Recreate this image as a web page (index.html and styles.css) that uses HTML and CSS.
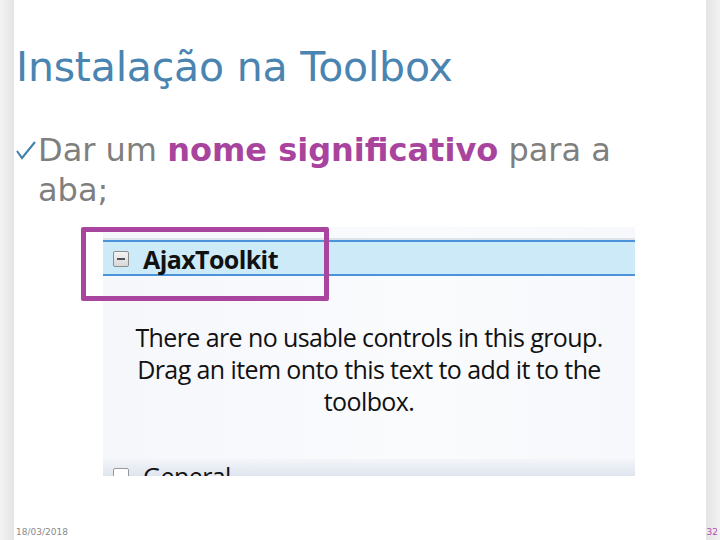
FILE: index.html
```html
<!doctype html>
<html lang="pt-br">
  <head>
    <meta charset="utf-8">
    <title>Instalação na Toolbox</title>
    <link rel="stylesheet" href="styles.css">
  </head>
  <body>
    <div class="slide">
      <h1 class="title">Instalação na Toolbox</h1>

      <ul class="bullets">
        <li>
          <svg class="check" width="20" height="20" viewBox="0 0 20 20">
            <path d="M1 11 L6 18 L19 2" fill="none" stroke="#3f7fab" stroke-width="2"/>
          </svg>
          <p class="bullet-text">Dar um <strong>nome significativo</strong> para a aba;</p>
        </li>
      </ul>

      <div class="shot">
        <div class="toolbox">
          <div class="group">
            <span class="toggle"><span class="dash"></span></span>
            <span class="group-name">AjaxToolkit</span>
          </div>
          <p class="empty">There are no usable controls in this group.<br>Drag an item onto this text to add it to the<br>toolbox.</p>
          <div class="group next">
            <span class="toggle"></span>
            <span class="group-name">General</span>
          </div>
        </div>
        <div class="highlight"></div>
      </div>

      <div class="footer">
        <span class="date">18/03/2018</span>
        <span class="page-num">32</span>
      </div>
    </div>
  </body>
</html>
```

FILE: styles.css
```css
body {
  margin: 0;
  font-family: "DejaVu Sans", Verdana, sans-serif;
}

.slide {
  width: 720px;
  height: 540px;
  box-sizing: border-box;
  padding: 43px 2px 0 16px;
  display: flex;
  flex-direction: column;
  background: linear-gradient(to right, #f4f4f4 0, #e4e4e4 14px, #fff 14px, #fff 706px, #e4e4e4 706px, #f2f2f2 720px);
}

.title {
  margin: 0;
  font-family: "DejaVu Sans", sans-serif;
  font-weight: normal;
  font-size: 41px;
  line-height: 48px;
  letter-spacing: -0.2px;
  color: #4a84b1;
}

.bullets {
  list-style: none;
  margin: 39px 0 0 0;
  padding: 0;
  width: 630px;
}

.bullets li {
  display: flex;
  align-items: flex-start;
}

.bullet-text {
  margin: 0;
  font-size: 32px;
  line-height: 40px;
  color: #7f7f7f;
}

.check {
  flex: none;
  margin: 10px 2px 0 0;
}

.bullets strong {
  color: #a8449d;
}

/* screenshot of the VS toolbox */
.shot {
  position: relative;
  margin: 17px 0 0 65px;
  width: 554px;
  height: 249px;
}

.toolbox {
  margin-left: 22px;
  height: 100%;
  padding-top: 11px;
  box-sizing: border-box;
  display: flex;
  flex-direction: column;
  background: linear-gradient(to right, #f5f7fb, #fafbfd 60%, #f6f8fb);
  font-family: "Open Sans", "Noto Sans", sans-serif;
  color: #111;
  overflow: hidden;
}

.group {
  display: flex;
  align-items: center;
  height: 35px;
  border-top: 2px solid #dfe4ea;
  box-shadow: inset 0 2px 0 #4b94dc, inset 0 -2px 0 #4b94dc;
  background: #cdeaf9;
  padding-top: 1px;
}

.toggle {
  width: 14px;
  height: 14px;
  margin: 0 14px 0 10px;
  border: 1px solid #8d8d8d;
  border-radius: 2px;
  background: linear-gradient(#f4f4f4, #d8d8d8);
  display: flex;
  align-items: center;
  justify-content: center;
}

.dash {
  width: 8px;
  height: 2px;
  background: #555;
}

.group-name {
  font-weight: 700;
  font-size: 25px;
  letter-spacing: -0.6px;
}

.empty {
  margin: 45px 0 0;
  text-align: center;
  font-size: 25px;
  line-height: 32px;
  letter-spacing: -0.6px;
}

.group.next {
  margin-top: auto;
  height: 17px;
  flex: none;
  align-items: flex-start;
  border: 0;
  box-shadow: none;
  background: linear-gradient(#f3f5f9, #dfe5ee);
  overflow: hidden;
  padding-top: 0;
}

.group.next .toggle {
  margin-top: 9px;
  background: #fff;
  border-color: #999;
}

.group.next .group-name {
  font-weight: 400;
  line-height: 34px;
  margin-top: 0;
}

.highlight {
  position: absolute;
  left: 0;
  top: 0;
  width: 238px;
  height: 64px;
  border: 5px solid #a9459f;
  border-radius: 2px;
}

.footer {
  margin-top: auto;
  display: flex;
  justify-content: space-between;
  align-items: flex-end;
  padding-bottom: 2px;
  font-size: 9px;
  line-height: 12px;
}

.date {
  color: #8a8a8a;
}

.page-num {
  color: #b050b0;
}
```
